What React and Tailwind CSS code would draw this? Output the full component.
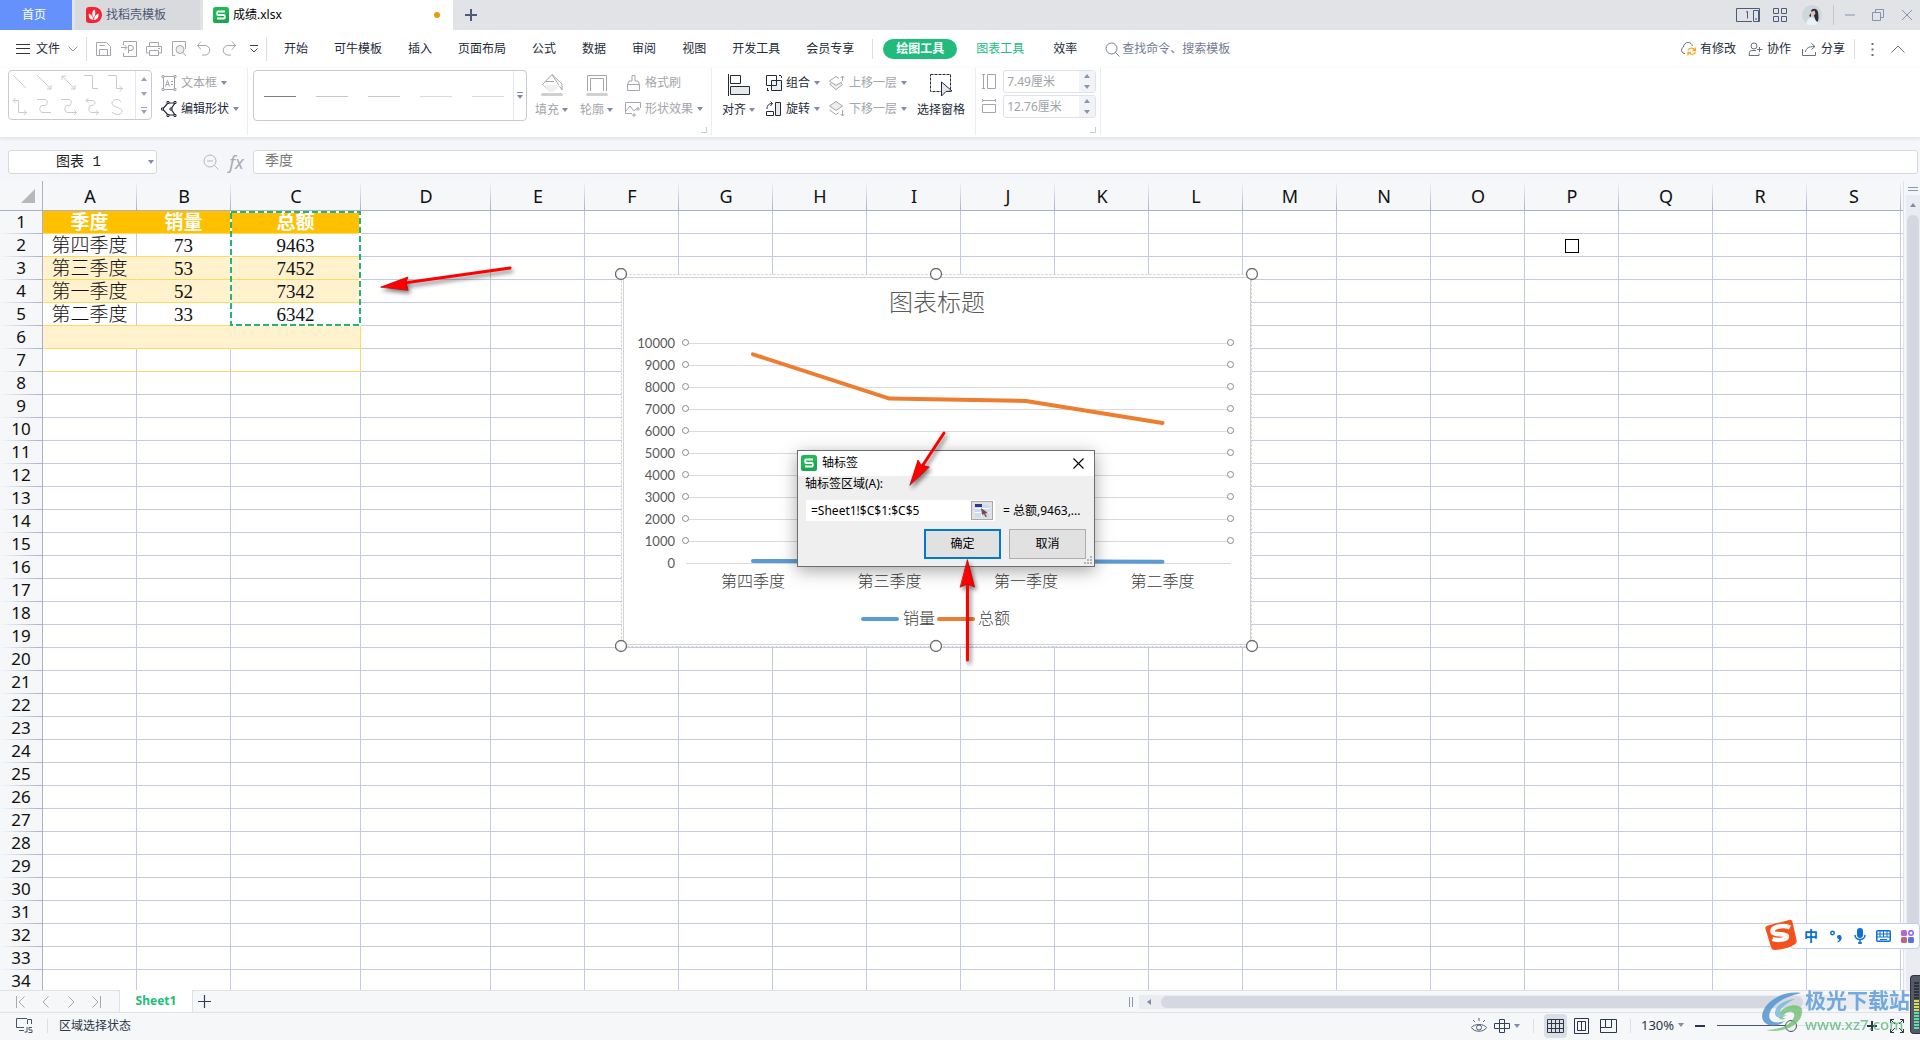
import { useState } from 'react'

const COLUMNS = ['A', 'B', 'C', 'D', 'E', 'F', 'G', 'H', 'I', 'J', 'K', 'L', 'M', 'N', 'O', 'P', 'Q', 'R', 'S']
const WIDE = ['C', 'D']
const ROWS = Array.from({ length: 34 }, (_, i) => i + 1)

const CELLS = {
  1: ['季度', '销量', '总额'],
  2: ['第四季度', '73', '9463'],
  3: ['第三季度', '53', '7452'],
  4: ['第一季度', '52', '7342'],
  5: ['第二季度', '33', '6342'],
}

const SERIES = [
  { name: '第四季度', count: 73, total: 9463 },
  { name: '第三季度', count: 53, total: 7452 },
  { name: '第一季度', count: 52, total: 7342 },
  { name: '第二季度', count: 33, total: 6342 },
]

const MENUS = ['开始', '可牛模板', '插入', '页面布局', '公式', '数据', '审阅', '视图', '开发工具', '会员专享']

function Icon({ w = 16, h = 16, className = '', children }) {
  return (
    <svg width={w} height={h} viewBox={`0 0 ${w} ${h}`} fill="none" stroke="currentColor" className={`shrink-0 ${className}`} aria-hidden="true">
      {children}
    </svg>
  )
}

function Caret({ className = 'text-[#7f8ba8]' }) {
  return (
    <Icon w={6} h={4} className={className}>
      <path d="M0 0h6L3 4z" fill="currentColor" stroke="none" />
    </Icon>
  )
}

function CaretUp({ className = 'text-[#8a94ab]' }) {
  return (
    <Icon w={6} h={4} className={className}>
      <path d="M0 4h6L3 0z" fill="currentColor" stroke="none" />
    </Icon>
  )
}

function SheetLogo() {
  return (
    <Icon className="text-white">
      <rect width="16" height="16" rx="2.5" fill="#1db954" stroke="none" />
      <path d="M0 13L16 6v7.5a2.500 2.500 0 0 1-2.500 2.500h-11A2.500 2.500 0 0 1 0 13.500z" fill="#139a48" opacity=".5" stroke="none" />
      <path d="M12 4.500H5.200a1 1 0 0 0-1 1V7a1 1 0 0 0 1 1h5.600a1 1 0 0 1 1 1v1.500a1 1 0 0 1-1 1H4" strokeWidth="1.800" />
    </Icon>
  )
}

function TitleBar() {
  return (
    <header className="flex h-[30px] shrink-0 items-stretch bg-[#e2e3e7] text-xs">
      <button className="w-[72px] bg-[#6491fb] pr-1 text-white">首页</button>
      <button className="ml-[3px] flex w-[125px] items-center gap-1 bg-[#d9dadd] pl-[11px] text-[#4b5872]">
        <Icon>
          <path d="M3 0h5a8 8 0 0 1 0 16H3a3 3 0 0 1-3-3V3a3 3 0 0 1 3-3z" fill="#f52435" stroke="none" />
          <path d="M7.500 13C2.500 12 2.500 9 3 6.500c2 1 4 3 4.500 6.500zM7.500 11C5.500 7 6 4.500 8.500 2.500c1.500 3 1 6-1 8.500zM8 13c0-3.500 2-5.500 4.500-6.500.5 3.500-1 6-4.500 6.500z" fill="#fff" stroke="none" />
        </Icon>
        找稻壳模板
      </button>
      <button className="ml-[3px] flex w-[250px] items-center gap-1 bg-white pl-[10px] pr-[13px] text-black">
        <SheetLogo />
        成绩.xlsx
        <span className="ml-auto h-1.5 w-1.5 rounded-full bg-[#e99b0a]" />
      </button>
      <button className="flex w-9 items-center justify-center text-[#4b5b78]" aria-label="新建标签">
        <Icon w={12} h={12}><path d="M6 0v12M0 6h12" strokeWidth="2" /></Icon>
      </button>
      <div className="ml-auto flex items-center pr-[7px] text-[#4b5b78]">
        <button aria-label="窗口布局">
          <Icon w={24} h={14}>
            <path d="M16 13.500H.5V.5h23v13H22M10 4l1.500-.5v7M17.500 13.500v-11h5v11zM19 11h2" />
          </Icon>
        </button>
        <button className="ml-[13px]" aria-label="应用">
          <Icon w={14} h={14}>
            <path d="M.5.5h5v5h-5zM8.500.5h5v5h-5zM.5 8.500h5v5h-5zM8.500 8.500h5v5h-5z" />
          </Icon>
        </button>
        <button className="ml-[15px]" aria-label="帐户">
          <Icon w={20} h={20}>
            <circle cx="10" cy="10" r="10" fill="#cbd9dc" stroke="none" />
            <path d="M4 19c1-5 4-7 7-6l3 1 2 4a10 10 0 0 1-12 1z" fill="#e6f3f7" stroke="none" />
            <path d="M9 6c1-3 6-3 7 1 .5 4 1 7-.5 10-2-1-2.500-3-3-5z" fill="#2f2a35" stroke="none" />
            <path d="M9 7l3.500-1.500 1 3-2 2.500c-1.500 0-2.500-1.500-2.500-4z" fill="#e8c2b6" stroke="none" />
            <path d="M7 11l2-3v4z" fill="#4a2b2b" stroke="none" />
          </Icon>
        </button>
        <span className="mx-[11px] h-5 w-px bg-[#c3c6ce]" />
        <div className="flex items-center gap-[17px] text-[#8593b1]">
          <button aria-label="最小化"><Icon w={10} h={12}><path d="M0 6h10" /></Icon></button>
          <button aria-label="还原"><Icon w={12} h={12}><path d="M3.500 3V.5h8v8H9M.5 3.500h8v8h-8z" /></Icon></button>
          <button aria-label="关闭"><Icon w={12} h={12}><path d="M1 1l10 10M11 1L1 11" /></Icon></button>
        </div>
      </div>
    </header>
  )
}

function MenuBar() {
  return (
    <nav className="flex h-[38px] shrink-0 items-center bg-white pl-4 pr-[15px] text-xs text-[#222b3a]">
      <button className="flex items-center">
        <Icon w={14} h={10} className="text-[#333]"><path d="M0 .5h14M0 4.500h14M0 9.500h14" /></Icon>
        <span className="ml-1.5">文件</span>
        <Icon w={10} h={6} className="ml-2 text-[#999]"><path d="M.5.5L5 5 9.500.5" /></Icon>
      </button>
      <span className="ml-2 h-6 w-px bg-[#dcdee3]" />
      <div className="ml-[9px] flex items-center gap-[9px] text-[#a3a6ab]">
        <button aria-label="保存"><Icon><path d="M.5 1.500h10l4 4v9H.5zM3.500 14V8.500h8V14M3.500 4.500H9" /></Icon></button>
        <button aria-label="输出为PDF"><Icon><path d="M2.500 4V.5h13v15h-13V12M0 6.500h5.500M3.500 4l2.500 2.500L3.500 9M7.500 12V4.500H10a2.500 2.500 0 0 1 0 5H7.500" /></Icon></button>
        <button aria-label="打印"><Icon><path d="M3.500 5V1.500h9V5M3.500 12h-3V5.500h15V12h-3M3.500 9.500h9v5h-9zM12 7.500h2" /></Icon></button>
        <button aria-label="打印预览"><Icon><path d="M4 14.500H1.500V.5h13V8" /><circle cx="9" cy="8.500" r="4" fill="#eee" /><path d="M12 11.500l3 3.500" /></Icon></button>
        <button aria-label="撤销"><Icon><path d="M5 .5L1.500 4.500 5 8.500M1.500 4.500H9a4.500 4.500 0 0 1 0 9.500H6" /></Icon></button>
        <button aria-label="恢复"><Icon><path d="M11 .5l3.500 4L11 8.500M14.500 4.500H7A4.500 4.500 0 0 0 7 14h3" /></Icon></button>
        <button className="ml-1 text-[#444]" aria-label="更多"><Icon w={8} h={8}><path d="M0 .5h8M.5 3.500L4 7l3.500-3.500" /></Icon></button>
      </div>
      <span className="ml-2 h-6 w-px bg-[#dcdee3]" />
      <div className="ml-[17px] flex items-center gap-[26px]">
        {MENUS.map((name) => (
          <button key={name}>{name}</button>
        ))}
      </div>
      <span className="ml-[18px] h-5 w-px bg-[#dcdee3]" />
      <button className="ml-2.5 h-5 w-[74px] rounded-full bg-[#21bb7e] font-bold text-white">绘图工具</button>
      <button className="ml-[19px] text-[#21bb7e]">图表工具</button>
      <button className="ml-[29px]">效率</button>
      <label className="ml-7 flex items-center gap-0.5 text-[#717c94]">
        <Icon w={15} h={15}><circle cx="6.500" cy="6.500" r="5.500" /><path d="M10.500 10.500l4 4" /></Icon>
        <input className="w-[150px] bg-transparent outline-none placeholder:text-[#717c94]" placeholder="查找命令、搜索模板" aria-label="查找命令、搜索模板" />
      </label>
      <div className="ml-auto flex items-center">
        <button className="flex items-center gap-1">
          <Icon className="text-[#66707f]">
            <path d="M5 12.500H4a3.500 3.500 0 0 1-.5-6.500C3.500 3 6 1.500 8 1.500c2.500 0 4 1.500 4.500 3.500" />
            <path d="M8 9.500a4 4 0 0 1 7-.5M15.500 6.500V9.500H12.500M15.500 11a4 4 0 0 1-7 .5M8 14.500v-3h3" stroke="#f5a623" strokeWidth="1.300" />
          </Icon>
          有修改
        </button>
        <button className="ml-3 flex items-center gap-1">
          <Icon w={15} h={15} className="text-[#66707f]"><circle cx="6" cy="4" r="3" /><path d="M8 8.500H3.500a2 2 0 0 0-2 2l-.5 3h10v-2M9 7.500h5.500M11.500 5v5" /></Icon>
          协作
        </button>
        <button className="ml-[11px] flex items-center gap-1">
          <Icon w={15} h={15} className="text-[#66707f]"><path d="M.5 7v6.500h13V10M3.500 10C4 6 7 4.500 12.500 4.500M9.500 1.500l3.500 3-3.500 3" /></Icon>
          分享
        </button>
        <span className="ml-[9px] h-5 w-px bg-[#dcdee3]" />
        <button className="ml-4" aria-label="更多选项">
          <Icon w={3} h={13}><path d="M1.500 0v2M1.500 5.500v2M1.500 11v2" stroke="#666f80" strokeWidth="2" /></Icon>
        </button>
        <button className="ml-[17px] text-[#666f80]" aria-label="折叠功能区">
          <Icon w={14} h={8}><path d="M.5 7.500L7 1l6.500 6.500" /></Icon>
        </button>
      </div>
    </nav>
  )
}

function SizeField({ id, label, icon, value }) {
  return (
    <div className="flex items-center gap-[7px]">
      <label htmlFor={id} aria-label={label} className="text-[#a3a6ab]">{icon}</label>
      <div className="flex h-[23px] w-[93px] rounded-[3px] border border-[#dfe2ea]">
        <input id={id} defaultValue={value} className="w-0 flex-1 pl-[3px] text-[#a0a3a8] outline-none" />
        <div className="flex w-4 flex-col items-center justify-around bg-[#f2f3f7]">
          <button className="flex" aria-label={`增加${label}`}><CaretUp /></button>
          <button className="flex" aria-label={`减少${label}`}><Caret className="text-[#8a94ab]" /></button>
        </div>
      </div>
    </div>
  )
}

function CornerMark({ className }) {
  return (
    <Icon w={6} h={6} className={`mb-1 mr-1 self-end text-[#c3cad8] ${className}`}><path d="M5.500 0v5.500H0" /></Icon>
  )
}

function Ribbon() {
  return (
    <section className="relative z-10 flex h-[70px] shrink-0 items-stretch border-b border-[#e6e7ea] bg-white pl-2 text-xs text-[#222b3a] shadow-[0_1px_3px_rgba(0,0,0,0.08)]">
      <div className="mt-0.5 flex h-[50px] w-36 rounded-sm border border-[#c9cacd]">
        <svg width="126" height="48" viewBox="0 0 126 48" fill="none" stroke="#c9cacd" aria-hidden="true">
          <path d="M4 4l13 13M28 4l14 14M42 14v4h-4M53 5l13 13M53 9V5h4M66 14v4h-4" />
          <path d="M75 4.500h8.500v13H89M99 4.500h8.500v13H113M110.500 15l3 2.500-3 3" />
          <path d="M4 29.500h5.500v12H17M6.500 27L4 29.500 6.500 32M15 39l2.500 2.500L15 44" />
          <path d="M28 28.500h8c3 0 3 5 0 6h-3c-3 1-3 7 1 7h8" />
          <path d="M52 28.500h8c3 0 3 5 0 6h-2c-3 1-3 7 1 7h8M65 39l2.500 2.500L65 44" />
          <path d="M77 29.500h6c4 0 4 4 0 5h-1c-3 1-3 7 1 7h6M79.500 27L77 29.500l2.500 2.500M87 39l2.500 2.500L87 44" />
          <path d="M112 31c-2-4-9-3-9 1 0 5 10 4 10 8 0 5-8 4-10 1" />
        </svg>
        <div className="flex flex-1 flex-col items-center justify-around border-l border-[#e6e7ea]">
          <button className="flex" aria-label="上一行"><CaretUp className="text-[#9aa4b8]" /></button>
          <button className="flex" aria-label="下一行"><Caret className="text-[#9aa4b8]" /></button>
          <button className="flex text-[#9aa4b8]" aria-label="展开形状"><Icon w={6} h={7}><path d="M0 .5h6" /><path d="M0 3h6L3 7z" fill="currentColor" stroke="none" /></Icon></button>
        </div>
      </div>
      <div className="ml-[9px] flex flex-col gap-2 pt-1.5">
        <button className="flex items-center gap-1 leading-[18px] text-[#a3a6ab]">
          <Icon><path d="M2.500 1.500h11v13h-11zM4.500 11.500l2-6 2 6M5 9.500h3M10 6.500h2M10 9.500h2" /><path d="M1 .5h2v2H1zM13 .5h2v2h-2zM1 13.500h2v2H1zM13 13.500h2v2h-2z" fill="#fff" /></Icon>
          文本框<Caret />
        </button>
        <button className="flex items-center gap-1 leading-[18px]">
          <Icon><path d="M7 2L1.500 8 7 14h7L10 8l4-6z" strokeWidth="1.200" /><path d="M6 .5h2v2H6zM13 .5h2v2h-2zM6 13.500h2v2H6zM13 13.500h2v2h-2zM.5 7h2v2h-2zM9 7h2v2H9z" fill="#fff" /></Icon>
          编辑形状<Caret />
        </button>
      </div>
      <span className="ml-2 mb-0.5 w-px bg-[#ebecef]" />
      <div className="ml-[5px] mt-0.5 flex h-[51px] w-[274px] rounded-sm border border-[#c9cacd]">
        <svg width="259" height="49" viewBox="0 0 259 49" fill="none" aria-hidden="true">
          <path d="M10 25.500h32" stroke="#808080" />
          <path d="M62 25.500h32M114 25.500h32" stroke="#c6c6c6" />
          <path d="M166 25.500h32M218 25.500h32" stroke="#dadada" />
        </svg>
        <button className="flex flex-1 items-center justify-center border-l border-[#e6e7ea] text-[#7f8ba8]" aria-label="展开线条样式">
          <Icon w={6} h={7}><path d="M0 .5h6" /><path d="M0 3h6L3 7z" fill="currentColor" stroke="none" /></Icon>
        </button>
      </div>
      <div className="ml-2 flex gap-3 pt-1.5 text-[#a3a6ab]">
        <button className="flex flex-col items-center gap-1.5">
          <Icon w={22} h={22}><path d="M1.500 10.500L11 .5l10 9.500v6M1.500 10.500L9 17M5 7.500h8M21 16L11 .5" /><path d="M2 11h18l-8 7H9z" fill="#f1f1f1" stroke="none" /><rect y="19" width="22" height="3" rx="1.500" fill="#d0d0d0" stroke="none" /></Icon>
          <span className="flex items-center gap-[3px] leading-4">填充<Caret /></span>
        </button>
        <button className="flex flex-col items-center gap-1.5">
          <Icon w={22} h={22}><path d="M1.500 17V1.500h19V17M4.500 17V4.500h13V17" /><rect y="19" width="22" height="3" rx="1.500" fill="#d0d0d0" stroke="none" /></Icon>
          <span className="flex items-center gap-[3px] leading-4">轮廓<Caret /></span>
        </button>
      </div>
      <div className="ml-3 flex flex-col gap-2 pt-1.5 text-[#a3a6ab]">
        <button className="flex items-center gap-1 leading-[18px]">
          <Icon><path d="M7 6V.5h3V6M7 6H4L2.500 9.500v6h12v-6L13 6h-3M2.500 9.500h12" /></Icon>
          格式刷
        </button>
        <button className="flex items-center gap-1 leading-[18px]">
          <Icon><path d="M7 12.500H.5v-11h15V7M1 10l4-5 4 5 2-2" /><path d="M13 6v4M11 8h4M9 12v4M7 14h4" /></Icon>
          形状效果<Caret />
        </button>
      </div>
      <CornerMark className="-ml-0.5" />
      <span className="mb-0.5 w-px bg-[#ebecef]" />
      <div className="ml-2.5 flex pt-1.5">
        <button className="flex flex-col items-center gap-1.5">
          <Icon w={22} h={22}><path d="M.5 0v22" /><path d="M2.500 1.500h10v8h-10z" /><path d="M2.500 12.500h19v8h-19z" fill="#e6e8ec" /></Icon>
          <span className="flex items-center gap-[3px] leading-4">对齐<Caret /></span>
        </button>
      </div>
      <div className="ml-[11px] flex flex-col gap-2 pt-1.5">
        <button className="flex items-center gap-1 leading-[18px]">
          <Icon><path d="M.5.5h10v10H.5z" /><path d="M5.500 5.500h10v10h-10z" fill="#e6e8ec" fillOpacity=".8" /><path d="M10.500 5v5.500H5M13 .5h2M15.500 1v2M1.500 13v2M1 15.500h2" /></Icon>
          组合<Caret />
        </button>
        <button className="flex items-center gap-1 leading-[18px]">
          <Icon><path d="M9.500 1.500h5v13h-5z" fill="#e6e8ec" /><path d="M.5 14.500v-4h7v4zM1 8c0-4 2-5.500 5.500-5.500M4.500.5l2 2-2 2.500" /></Icon>
          旋转<Caret />
        </button>
      </div>
      <div className="ml-[9px] flex flex-col gap-2 pt-1.5 text-[#a3a6ab]">
        <button className="flex items-center gap-1 leading-[18px]">
          <Icon><path d="M2 8l-1 1.500 6 5 6.500-5L12 8" fill="#f1f1f1" /><path d="M.5 6L7 1.500 10 3.500M.5 6L7 10.500 13 7M13.500 6V1M11.500 3l2-2 2 2" /></Icon>
          上移一层<Caret />
        </button>
        <button className="flex items-center gap-1 leading-[18px]">
          <Icon><path d="M7 .5L13.500 5 7 9.500.5 5z" fill="#eee" /><path d="M.5 9L7 13.500l3-2M13.500 9v6M11.500 13l2 2 2-2" /></Icon>
          下移一层<Caret />
        </button>
      </div>
      <button className="ml-2.5 flex flex-col items-center gap-1.5 self-start pt-1.5">
        <Icon w={24} h={22}><path d="M1.500.5h20v17h-20z" strokeDasharray="3 1" /><path d="M12.500 8v14l4.500-4.500 6-.5z" fill="#e6e8ec" /></Icon>
        <span className="leading-4">选择窗格</span>
      </button>
      <span className="mb-0.5 ml-2.5 w-px bg-[#ebecef]" />
      <div className="ml-1.5 flex flex-col gap-0.5 pt-0.5">
        <SizeField id="shape-height" label="高度" value="7.49厘米" icon={<Icon w={14} h={15}><path d="M0 .5h3M1.500.5v14M0 14.500h3M5.500.5h8v14h-8z" /></Icon>} />
        <SizeField id="shape-width" label="宽度" value="12.76厘米" icon={<Icon w={14} h={15}><path d="M.5 0v3M.5 1.500h13M13.500 0v3M.5 5.500h13v8H.5z" /></Icon>} />
      </div>
      <CornerMark className="-ml-1.5" />
      <span className="mb-0.5 w-px bg-[#ebecef]" />
    </section>
  )
}

function FormulaBar() {
  return (
    <section className="flex h-[43px] shrink-0 items-center bg-[#f5f6f9] pb-[7px] pl-2 pr-0.5 pt-3">
      <div className="flex h-6 w-[149px] items-center rounded-[3px] border border-[#d6d9e0] bg-white pr-0.5">
        <input defaultValue="图表 1" aria-label="名称框" className="w-0 flex-1 text-center text-sm text-[#222] outline-none [font-family:'Liberation_Mono','Noto_Sans_CJK_SC',monospace]" />
        <button className="flex" aria-label="名称列表"><Caret /></button>
      </div>
      <button className="ml-[46px] text-[#b5b7bb]" aria-label="浏览公式结果">
        <Icon><circle cx="7" cy="7" r="6" /><path d="M4 7h6M11.500 11.500l4 4" /></Icon>
      </button>
      <button className="ml-2.5 w-[15px] text-lg italic leading-6 text-[#a8aaae]">fx</button>
      <input defaultValue="季度" aria-label="编辑栏" className="ml-[9px] h-6 min-w-0 flex-1 rounded-[3px] border border-[#d6d9e0] bg-white pb-1.5 pl-[11px] text-sm text-[#777] outline-none" />
    </section>
  )
}

function cellClass(row, col) {
  if (col > 2 || row > 7) return 'border-[#c5cbdf]'
  let cls = 'border-b-[#ffd966] '
  if (row === 1) cls += 'bg-[#ffc000] border-r-[#ffc000] font-bold text-white'
  else if (row === 3 || row === 4) cls += 'bg-[#fff2cc] border-r-[#fff2cc] font-light'
  else if (row === 6) cls += col === 2 ? 'bg-[#fff2cc] border-r-[#ffd966]' : 'bg-[#fff2cc] border-r-[#fff2cc]'
  else cls += col === 2 ? 'border-r-[#ffd966] font-light' : 'border-r-[#c5cbdf] font-light'
  return cls
}

function Grid() {
  return (
    <table className="w-[1950px] table-fixed border-separate border-spacing-0 text-[#111]">
      <colgroup>
        <col className="w-[43px]" />
        {COLUMNS.map((c) => (
          <col key={c} className={WIDE.includes(c) ? 'w-[130px]' : 'w-[94px]'} />
        ))}
        <col />
      </colgroup>
      <thead>
        <tr className="h-[30px] text-lg leading-6">
          <th className="border-b border-r border-[#a9b1ca] bg-[#f5f7f9] p-0">
            <Icon w={14} h={14} className="ml-auto mr-[7px] text-[#b7b8bb]"><path d="M14 0v14H0z" fill="currentColor" stroke="none" /></Icon>
          </th>
          {COLUMNS.map((c) => (
            <th key={c} className="border-b border-[#a9b1ca] bg-[#f5f7f9] bg-[linear-gradient(to_bottom,#f5f7f9,#a9b1ca)] bg-[length:1px_100%] bg-right bg-no-repeat p-0 font-normal">{c}</th>
          ))}
          <th className="border-b border-[#a9b1ca] bg-[#f5f7f9] p-0" />
        </tr>
      </thead>
      <tbody>
        {ROWS.map((r) => (
          <tr key={r} className="h-[23px]">
            <th className="border-r border-[#a9b1ca] bg-[#f5f7f9] bg-[linear-gradient(to_right,#f5f7f9,#a9b1ca)] bg-[length:100%_1px] bg-bottom bg-no-repeat p-0 pb-0.5 text-[17px] font-normal leading-5">{r}</th>
            {COLUMNS.map((c, i) => (
              <td key={c} className={`overflow-hidden whitespace-nowrap border-b border-r p-0 pt-0.5 text-center text-[19px] leading-5 [font-family:'Liberation_Serif','Noto_Sans_CJK_SC',serif] ${cellClass(r, i)}`}>
                {CELLS[r] && CELLS[r][i]}
              </td>
            ))}
            <td className="border-b border-[#c5cbdf] p-0" />
          </tr>
        ))}
      </tbody>
    </table>
  )
}

const plotX = (i) => 138 + i * 136.5
const plotY = (v) => 294.5 - v * 0.022

function Chart() {
  const ticks = Array.from({ length: 11 }, (_, i) => i * 1000)
  const line = (key) => SERIES.map((s, i) => `${plotX(i)},${plotY(s[key])}`).join(' ')
  return (
    <svg className="absolute left-[615px] top-[87px]" width="644" height="385" viewBox="0 0 644 385" fill="none">
      <rect x="6.500" y="6.500" width="630" height="372" fill="#fff" stroke="#c9c9c9" strokeDasharray="2 2" />
      <rect x="8.500" y="9.500" width="627" height="367" fill="#fff" stroke="#d4d4d4" />
      <text x="322" y="43" textAnchor="middle" className="fill-[#595959] text-2xl font-light">图表标题</text>
      {ticks.map((t) => {
        const y = 295.5 - t * 0.022
        return (
          <g key={t}>
            <path d={`M71 ${y}H616`} stroke="#d9d9d9" />
            <text x="60" y={y + 4} textAnchor="end" className="fill-[#595959] text-[13px] [font-family:Lato,sans-serif]">{t}</text>
            {t > 0 && <circle cx="70.500" cy={y - 1} r="3" fill="#fff" stroke="#8a8a8a" />}
            {t > 0 && <circle cx="615.500" cy={y - 1} r="3" fill="#fff" stroke="#8a8a8a" />}
          </g>
        )
      })}
      <polyline points={line('count')} stroke="#5b9bd5" strokeWidth="4" strokeLinecap="round" strokeLinejoin="round" />
      <polyline points={line('total')} stroke="#ed7d31" strokeWidth="4" strokeLinecap="round" strokeLinejoin="round" />
      {SERIES.map((s, i) => (
        <text key={s.name} x={plotX(i)} y="319" textAnchor="middle" className="fill-[#404040] text-base font-light">{s.name}</text>
      ))}
      <path d="M248 351h34" stroke="#5b9bd5" strokeWidth="4" strokeLinecap="round" />
      <text x="288" y="356" className="fill-[#404040] text-base font-light">销量</text>
      <path d="M324 351h34" stroke="#ed7d31" strokeWidth="4" strokeLinecap="round" />
      <text x="363" y="356" className="fill-[#404040] text-base font-light">总额</text>
      {[6, 321, 637].map((x) => [6, 378].map((y) => (
        <circle key={`${x}-${y}`} cx={x} cy={y} r="5.500" fill="#fff" stroke="#6b6b6b" strokeWidth="1.300" />
      )))}
    </svg>
  )
}

function AxisDialog() {
  const [range, setRange] = useState('=Sheet1!$C$1:$C$5')
  return (
    <div role="dialog" aria-label="轴标签" className="absolute left-[797px] top-[269px] w-[298px] border border-[#6e6e6e] bg-[#efefef] text-xs text-black shadow-[0_4px_16px_rgba(0,0,0,0.35)]">
      <div className="flex h-[25px] items-center gap-[5px] bg-white pb-px pl-[3px] pr-2.5">
        <SheetLogo />
        轴标签
        <button className="ml-auto" aria-label="关闭"><Icon w={11} h={11}><path d="M.5.5l10 10M10.500.5l-10 10" strokeWidth="1.100" /></Icon></button>
      </div>
      <label htmlFor="axis-range" className="block pl-[7px] leading-4">轴标签区域(A):</label>
      <div className="mt-2 flex items-center pl-2">
        <div className="flex h-[21px] w-[189px] items-center bg-white pl-[5px] pr-0.5">
          <input id="axis-range" value={range} onChange={(e) => setRange(e.target.value)} className="w-0 flex-1 outline-none" />
          <button className="flex h-[19px] w-[22px] items-center justify-center border border-[#a9a9a9] bg-[#e1e1e1]" aria-label="选择区域">
            <Icon>
              <rect x="1" y="2" width="14" height="12" fill="#c8dcfa" stroke="none" />
              <path d="M1 5.500h14M1 9.500h14M7.500 5v9" stroke="#fff" />
              <rect x="1" y="1" width="7" height="3" fill="#2c3a86" stroke="none" />
              <path d="M7 5l7 5-3 .5 2 3-1.500.5-1.500-3-2 1z" fill="#7b4b44" stroke="none" />
            </Icon>
          </button>
        </div>
        <span className="ml-2">= 总额,9463,...</span>
      </div>
      <div className="flex justify-end gap-2 pb-[7px] pr-2 pt-2">
        <button className="h-[30px] w-[77px] border-2 border-[#0078d7] bg-[#e1e1e1]">确定</button>
        <button className="h-[30px] w-[77px] border border-[#adadad] bg-[#e1e1e1]">取消</button>
      </div>
      <Icon w={8} h={8} className="absolute bottom-0.5 right-0.5 text-[#b5b5b5]">
        <path d="M6 0h2v2H6zM3 3h2v2H3zM6 3h2v2H6zM0 6h2v2H0zM3 6h2v2H3zM6 6h2v2H6z" fill="currentColor" stroke="none" />
      </Icon>
    </div>
  )
}

function Arrows() {
  return (
    <svg className="pointer-events-none absolute left-0 top-0 drop-shadow-[2px_3px_2px_rgba(0,0,0,0.5)]" width="1000" height="490" viewBox="0 0 1000 490" fill="#f00" stroke="#f00" strokeLinecap="round">
      <path d="M510 87L404 102" strokeWidth="3" />
      <path d="M381 106l27-10-2 5 2 8z" stroke="#b00" strokeWidth=".8" />
      <path d="M944 252l-23 35" strokeWidth="3" />
      <path d="M910 304l8-25 3 5 8 2z" stroke="#b00" strokeWidth=".8" />
      <path d="M967.500 479v-88" strokeWidth="3" />
      <path d="M967.500 379l7 27-7-3-7 3z" stroke="#b00" strokeWidth=".8" />
    </svg>
  )
}

function SheetArea() {
  return (
    <main className="flex min-h-0 flex-1 bg-[#f5f6f9]">
      <div className="relative min-w-0 flex-1 overflow-hidden bg-white">
        <Grid />
        <svg className="absolute left-[230px] top-[30px]" width="131" height="115" viewBox="0 0 131 115" fill="none" aria-hidden="true">
          <rect x="1" y="1" width="129" height="113" stroke="#fff" strokeWidth="2" />
          <rect x="1" y="1" width="129" height="113" stroke="#21b57a" strokeWidth="2" strokeDasharray="6 3" />
        </svg>
        <span className="absolute left-[1565px] top-[58px] h-3.5 w-3.5 border border-black bg-white" />
        <Chart />
        <AxisDialog />
        <Arrows />
      </div>
      <div className="flex w-[17px] flex-col items-center border-l border-[#e0e2e8] pl-0.5">
        <Icon w={10} h={14} className="text-[#8a97b5]"><path d="M0 6.500h10M0 9.500h10" /></Icon>
        <div className="flex w-full flex-1 flex-col items-center bg-[#ebecf1] pt-2">
          <button className="flex" aria-label="向上滚动"><CaretUp className="text-[#7f8ba8]" /></button>
          <span className="mb-[54px] mt-2 w-3 flex-1 rounded-full bg-[#d5d8e0]" />
        </div>
      </div>
    </main>
  )
}

function SheetTabs() {
  return (
    <div className="flex h-[22px] shrink-0 items-stretch border-t border-[#dfe2e8] bg-[#f5f7f9] text-xs">
      <div className="flex w-[119px] items-center gap-[17px] pl-4 text-[#a5a8ad]">
        <button aria-label="第一张"><Icon w={9} h={12}><path d="M.5 0v12M8.500.5L3 6l5.500 5.500" /></Icon></button>
        <button aria-label="上一张"><Icon w={7} h={12}><path d="M6.500.5L1 6l5.500 5.500" /></Icon></button>
        <button className="ml-0.5" aria-label="下一张"><Icon w={7} h={12}><path d="M.5.5L6 6 .5 11.500" /></Icon></button>
        <button aria-label="最后一张"><Icon w={9} h={12}><path d="M8.500 0v12M.5.5L6 6 .5 11.500" /></Icon></button>
      </div>
      <button className="-mt-px w-[74px] border-x border-[#dfe2e8] bg-white font-bold text-[#21bb7e]">Sheet1</button>
      <button className="ml-[5px]" aria-label="新建工作表"><Icon w={13} h={13} className="text-[#33405c]"><path d="M6.500 0v13M0 6.500h13" strokeWidth="1.200" /></Icon></button>
      <div className="ml-auto flex w-[791px] items-center">
        <Icon w={4} h={10} className="text-[#8a97b5]"><path d="M.5 0v10M3.500 0v10" /></Icon>
        <div className="ml-1.5 mr-[17px] flex h-3.5 flex-1 items-center bg-[#ebecf1] pl-2">
          <button className="flex" aria-label="向左滚动"><Icon w={4} h={6} className="text-[#7f8ba8]"><path d="M4 0v6L0 3z" fill="currentColor" stroke="none" /></Icon></button>
          <span className="ml-2.5 mr-[100px] h-3 flex-1 rounded-full bg-[#d5d8e0]" />
        </div>
      </div>
    </div>
  )
}

function StatusBar() {
  const [zoom, setZoom] = useState(50)
  return (
    <footer className="flex h-7 shrink-0 items-center border-t border-[#dfe2e8] bg-[#f5f7f9] pb-0.5 pl-4 pr-4 text-xs text-[#2c3648]">
      <Icon w={17} h={16} className="text-[#4b5568]"><path d="M11 .5H.5v9H8M3 12.500h5M11.500 6V1.500h4V6M11 9v5H8.500M16 9.500h-3v2.500h3v2.500h-3.500" /></Icon>
      <span className="ml-3.5 h-3.5 w-px bg-[#dcdfe5]" />
      <span className="ml-[11px]">区域选择状态</span>
      <div className="ml-auto flex items-center">
        <button aria-label="护眼模式"><Icon className="text-[#566074]"><path d="M.5 9.500C3 5.500 13 5.500 15.500 9.500 13 14.500 3 14.500.5 9.500zM8 0v3M2 2l2 2M14 2l-2 2" /><circle cx="8" cy="9.500" r="2.500" /></Icon></button>
        <button className="ml-[7px] flex items-center gap-1" aria-label="阅读模式"><Icon className="text-[#33405c]"><path d="M5.500 1.500h5v4h5v5h-5v4h-5v-4h-5v-5h5zM5.500 5.500h5v5h-5z" /></Icon><Caret /></button>
        <span className="ml-[13px] h-3.5 w-px bg-[#dcdfe5]" />
        <button className="ml-2.5 flex h-6 w-[23px] items-center justify-center rounded-sm bg-[#dadfe6]" aria-label="普通视图"><Icon w={17} h={14}><path d="M.5.5h16v13H.5zM.5 4.500h16M.5 9.500h16M4.500.5v13M8.500.5v13M12.500.5v13" /></Icon></button>
        <button className="ml-[7px]" aria-label="分页预览"><Icon w={15}><path d="M.5.5h14v15H.5zM3.500 3.500h8v9h-8zM7.500 3.500v9" /></Icon></button>
        <button className="ml-[11px]" aria-label="页面布局"><Icon w={17} h={14}><path d="M.5.5h16v13H.5zM5.500.5v8H.5M11.500.5v8h-6M11.500 8.500V5.500" /></Icon></button>
        <span className="ml-[13px] h-3.5 w-px bg-[#dcdfe5]" />
        <button className="ml-2.5 flex w-[43px] items-center justify-between text-[13px]">130%<Caret /></button>
        <button className="ml-[11px]" aria-label="缩小"><Icon w={10} h={12}><path d="M0 6h10" strokeWidth="2" /></Icon></button>
        <input
          type="range"
          aria-label="缩放比例"
          value={zoom}
          onChange={(e) => setZoom(Number(e.target.value))}
          className="ml-3 h-3 w-[148px] appearance-none bg-[linear-gradient(to_right,#4b5568_50%,#dcdfe5_50%)] bg-[length:100%_1px] bg-center bg-no-repeat [&::-webkit-slider-thumb]:h-3 [&::-webkit-slider-thumb]:w-3 [&::-webkit-slider-thumb]:appearance-none [&::-webkit-slider-thumb]:rounded-full [&::-webkit-slider-thumb]:border [&::-webkit-slider-thumb]:border-[#4b5568] [&::-webkit-slider-thumb]:bg-[#f0f0f0]"
        />
        <button className="ml-0.5" aria-label="放大"><Icon w={10} h={10}><path d="M5 0v10M0 5h10" strokeWidth="2" /></Icon></button>
        <button className="ml-[13px]" aria-label="全屏"><Icon w={14} h={14}><path d="M.5 4V.5H4M10 .5h3.500V4M13.500 10v3.500H10M4 13.500H.5V10M.5.5l4.500 4.500M13.500.5L9 5M13.500 13.500L9 9M.5 13.500L5 9" /></Icon></button>
      </div>
    </footer>
  )
}

function ImeBar() {
  return (
    <div className="absolute bottom-[91px] right-0 z-20 flex h-[26px] w-[130px] items-center rounded-sm border border-[#bfd0e8] bg-white pl-[5px] text-sm text-[#0a6fd8]">
      <svg className="absolute -left-[26px] -top-[5px]" width="32" height="32" viewBox="0 0 32 32" aria-hidden="true">
        <path d="M3 6.500L24 1c2-.5 3 .5 3.500 2L31.500 21c.5 2 0 3-2 4.500-5 3.500-13 5-20 5.500-2 0-3-1-3.500-3L.5 10c-.5-2 .5-3 2.500-3.500z" fill="#f4511c" />
        <path d="M25 8.500C18 5 7 8 7.500 12.500c.5 4 14 1.500 14.500 5 .5 3-9 4.500-14.500 2.500" fill="none" stroke="#fff" strokeWidth="4.500" />
      </svg>
      <button className="ml-2 font-bold leading-5">中</button>
      <button className="ml-3" aria-label="中文标点"><Icon w={12} h={14}><circle cx="2.500" cy="4" r="1.700" strokeWidth="1.500" /><path d="M9 6a2 2 0 1 0 0 4c.2 1-.5 2-1.500 2.500v1C11 12.500 12 10 11.500 8A2.200 2.200 0 0 0 9 6z" fill="currentColor" stroke="none" /></Icon></button>
      <button className="ml-3" aria-label="语音"><Icon w={12}><rect x="3" width="6" height="10" rx="3" fill="currentColor" stroke="none" /><path d="M1 7c0 6 10 6 10 0M6 12v4M4 15h4" strokeWidth="1.500" /></Icon></button>
      <button className="ml-2.5" aria-label="软键盘"><Icon w={15} h={12}><rect x=".75" y=".75" width="13.500" height="10.500" rx="1" strokeWidth="1.500" /><path d="M1 4h13M1 7h13M4 1v6M7.500 1v6M11 1v6M4 9.500h7" /></Icon></button>
      <button className="ml-2.5" aria-label="工具箱"><Icon w={13} h={13}><rect width="6" height="6" rx="1.500" fill="#b06ad8" stroke="none" /><circle cx="10" cy="3" r="2.300" stroke="#8b5cf6" strokeWidth="1.500" /><rect y="7" width="6" height="6" rx="1.500" fill="#c0657f" stroke="none" /><rect x="7" y="7" width="6" height="6" rx="1.500" fill="#5b6fe8" stroke="none" /></Icon></button>
    </div>
  )
}

function SiteMark() {
  return (
    <div className="pointer-events-none absolute bottom-1 right-2.5 z-20 flex items-center gap-0.5 opacity-80">
      <svg width="42" height="40" viewBox="0 0 42 40" aria-hidden="true">
        <path d="M40 1C22-2 2 10 1 24c0 10 14 13 23 5C12 33 6 28 9 20 13 10 27 4 40 1z" fill="#4a90cf" />
        <path d="M41 17c-2-6-16-5-22 3-4 6 1 10 6 6-3 1-4-1-2-3 4-5 12-4 10 2-3 8-14 13-28 13 18 4 38-6 36-21z" fill="#6fbf73" />
        <path d="M34 7c-12 1-21 8-20 15 1 5 8 4 12 1-5 1-8 0-7-3 1-5 7-9 15-13z" fill="#73b8dd" />
      </svg>
      <div className="flex flex-col">
        <span className="text-[21px] font-bold leading-6 text-[#5598d6]">极光下载站</span>
        <span className="text-[15px] font-medium leading-6 text-[#5cb879]">www.xz7.com</span>
      </div>
    </div>
  )
}

function LevelMeter() {
  return (
    <div className="absolute bottom-1.5 right-0 z-20 flex h-[59px] w-2.5 justify-end rounded-l border border-r-0 border-[#30343e] bg-[#555a68]">
      <svg width="6" height="57" viewBox="0 0 6 57" aria-hidden="true">
        {Array.from({ length: 16 }, (_, i) => (
          <rect key={i} x="0" y={6 + i * 3} width="5" height="2" fill={i < 6 ? '#2e323c' : i < 10 ? '#d8dc50' : '#5de0a8'} />
        ))}
      </svg>
    </div>
  )
}

export default function App() {
  return (
    <div className="relative flex h-screen flex-col overflow-hidden bg-white [font-family:'Noto_Sans','Noto_Sans_CJK_SC',sans-serif]">
      <TitleBar />
      <MenuBar />
      <Ribbon />
      <FormulaBar />
      <SheetArea />
      <SheetTabs />
      <StatusBar />
      <ImeBar />
      <SiteMark />
      <LevelMeter />
    </div>
  )
}
